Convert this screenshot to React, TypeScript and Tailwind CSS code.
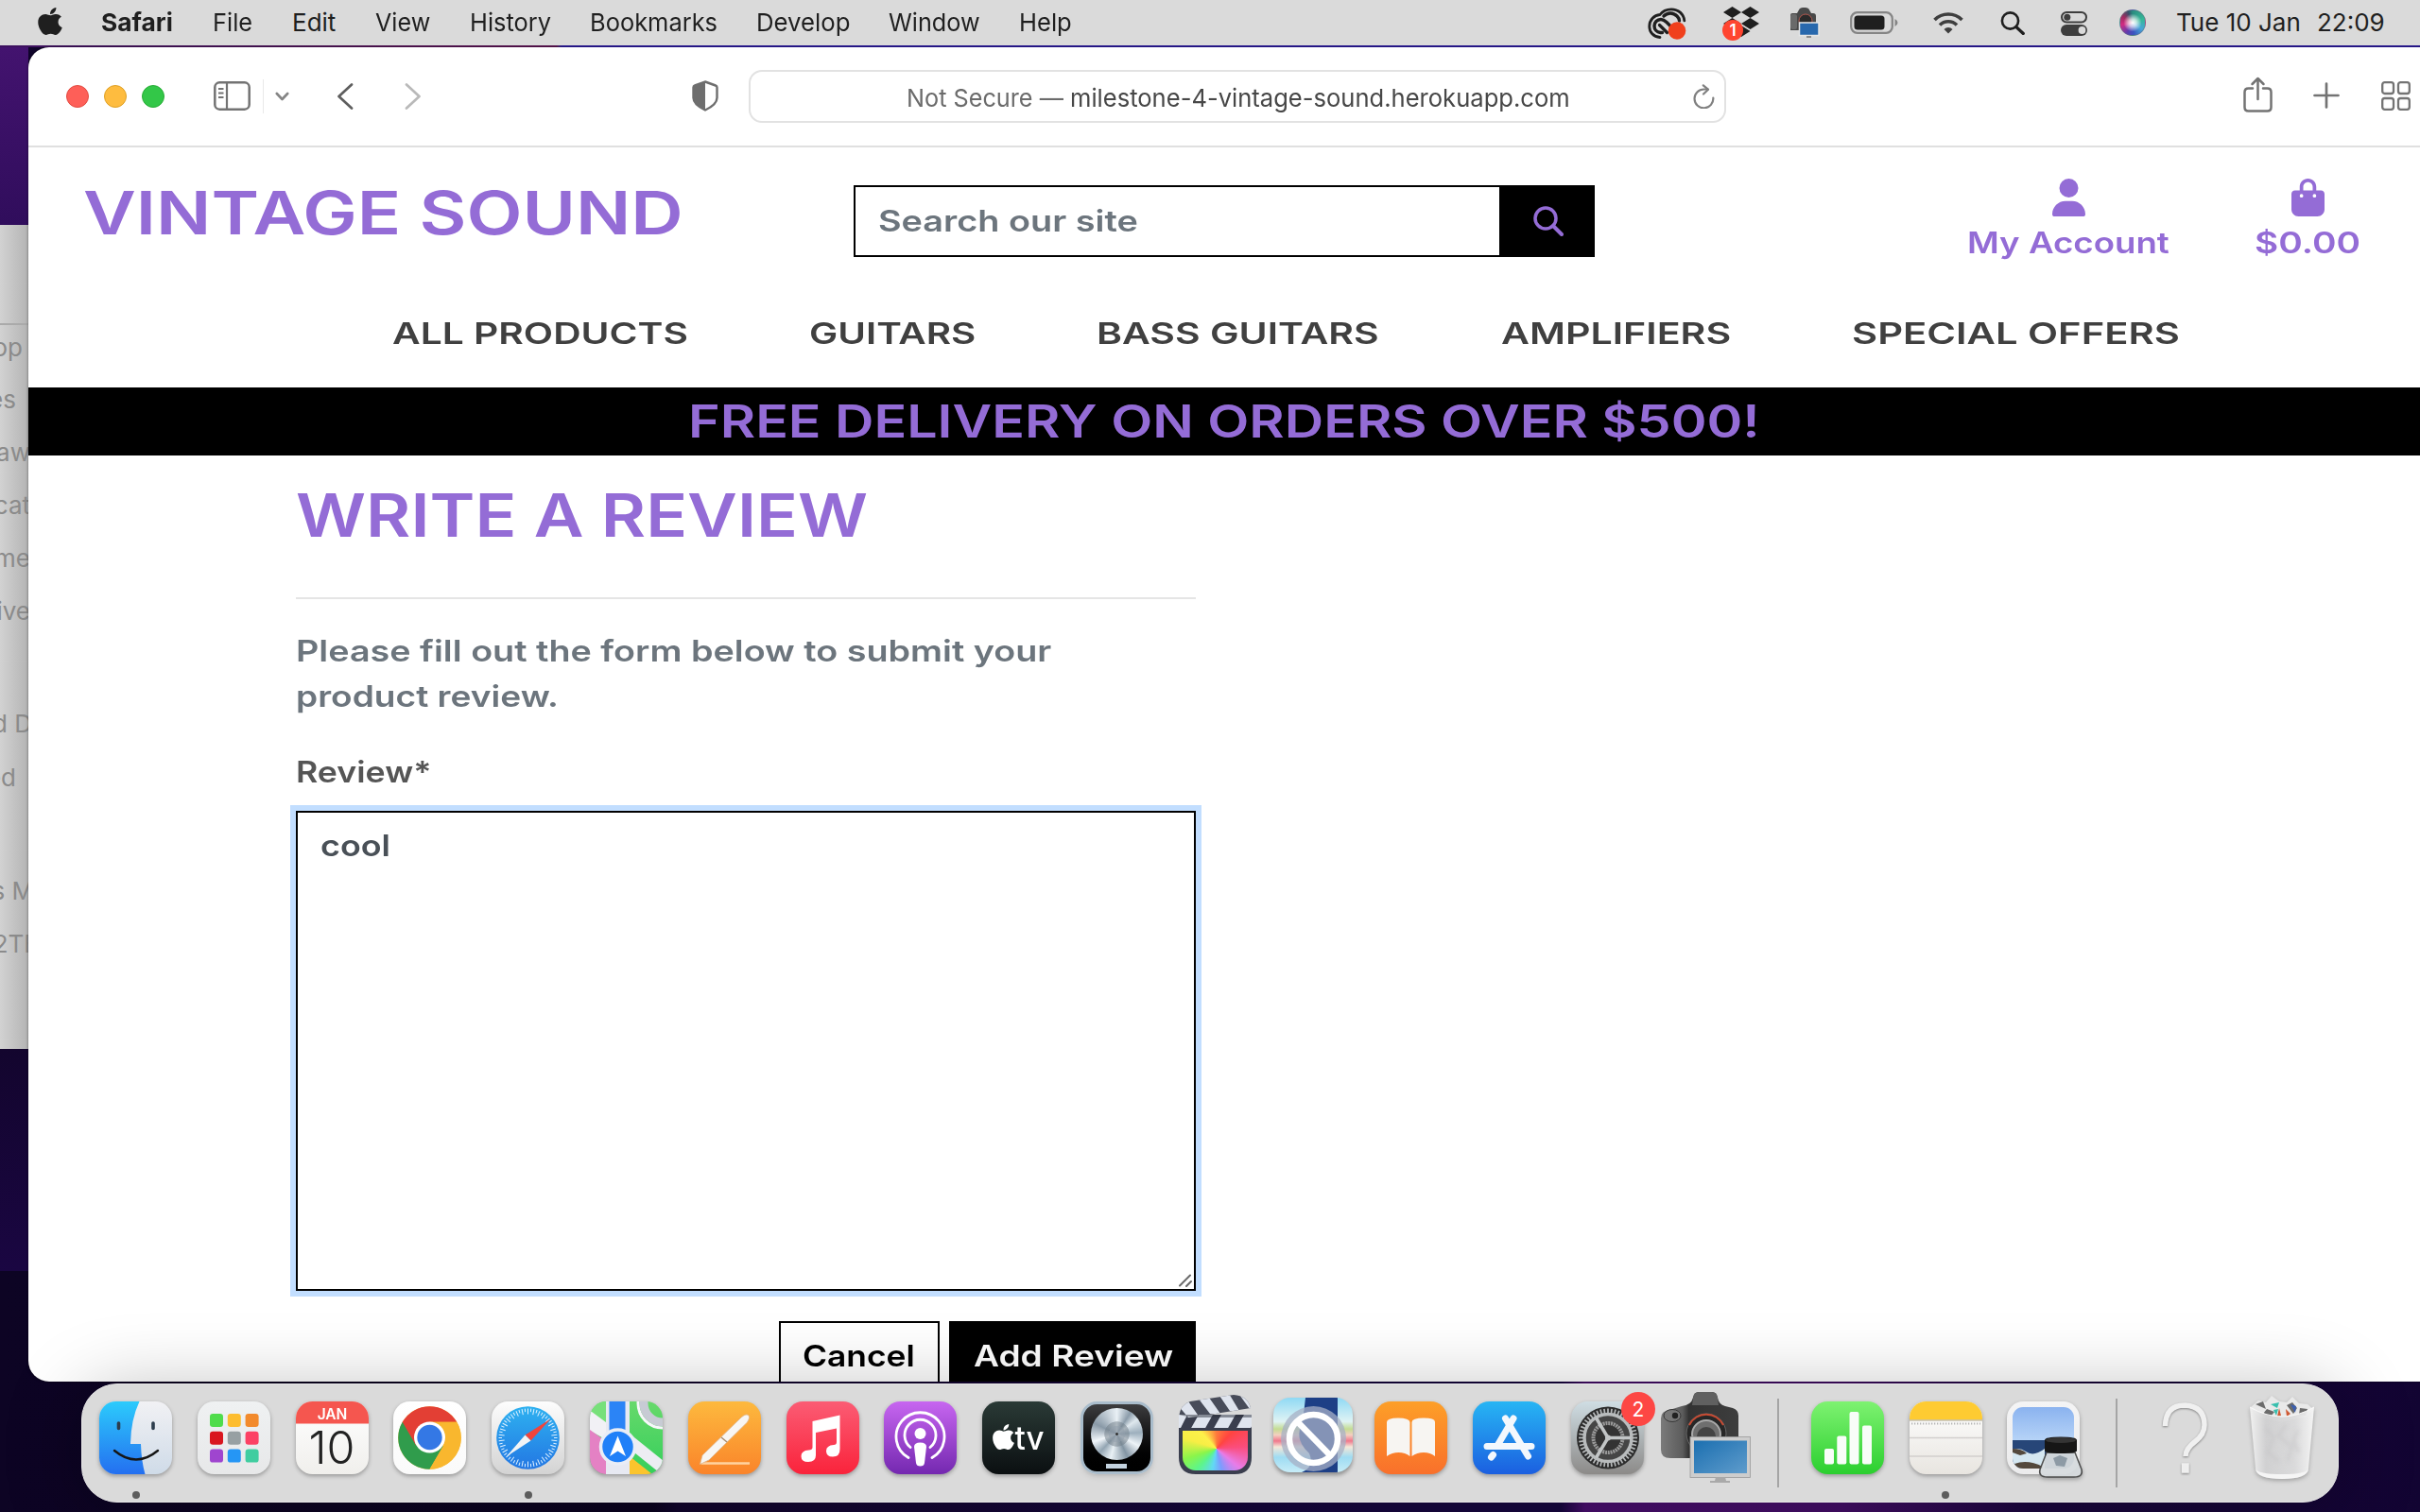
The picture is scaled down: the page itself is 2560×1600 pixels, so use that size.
import React, { useLayoutEffect, useRef, useState } from "react";
import { FaApple, FaBagShopping, FaUser } from "react-icons/fa6";

/** Text stretched horizontally so that it fills exactly `w` pixels. */
function Fit({ w, className = "", children }: { w: number; className?: string; children: string }) {
  const ref = useRef<HTMLSpanElement>(null);
  const [scale, setScale] = useState(1);
  useLayoutEffect(() => {
    if (ref.current) setScale(w / ref.current.offsetWidth);
  }, [w, children]);
  return (
    <span className={"block shrink-0 whitespace-pre " + className} style={{ width: w }}>
      <span ref={ref} className="inline-block origin-left" style={{ transform: `scaleX(${scale})` }}>
        {children}
      </span>
    </span>
  );
}

/* ---------- menu bar ---------- */

const menus = [
  { label: "File", w: 42, cls: "ml-[42px]" },
  { label: "Edit", w: 46, cls: "ml-[42px]" },
  { label: "View", w: 58, cls: "ml-[42px]" },
  { label: "History", w: 86, cls: "ml-[42px]" },
  { label: "Bookmarks", w: 135, cls: "ml-[41px]" },
  { label: "Develop", w: 99, cls: "ml-[41px]" },
  { label: "Window", w: 97, cls: "ml-[41px]" },
  { label: "Help", w: 56, cls: "ml-[41px]" },
];

function MenuBar() {
  return (
    <header className="relative flex h-12 items-center bg-[#dadada] pl-10 text-[26px] leading-[45px] text-[#1f1f1f]">
      <FaApple className="-mt-1 h-[33px] w-[26px] shrink-0" preserveAspectRatio="none" />
      <Fit w={76} className="ml-[41px] -mt-[2px] font-bold">Safari</Fit>
      {menus.map((m) => (
        <Fit key={m.label} w={m.w} className={"-mt-[2px] " + m.cls}>{m.label}</Fit>
      ))}
      <div className="ml-auto flex h-12 items-center pr-[37px]">
        <svg className="mr-[39px] mt-[2px] h-[34px] w-[41px] shrink-0" viewBox="0 0 41 34">
          <g fill="none" stroke="#1f1f1f" strokeLinecap="round">
            <path d="M13 31.500C6 31 1.800 26 1.800 20 1.800 13 7 8 13 7.500 16 3.500 20 1.800 25 1.800c7.500 0 13 5 13.800 12" strokeWidth="2.800" />
            <path d="M15.500 26.500h-2c-4-.5-6.500-3.500-6.500-7 0-4 3-7 7-7 3 0 4.500 1.500 6 3l4.500 4.500" strokeWidth="3.400" />
            <path d="M17 9c4-4 10-4 14 0 1.800 1.800 2.500 3.500 2.500 5" strokeWidth="3.400" />
            <path d="M12.500 18.500l8 8" strokeWidth="3.200" />
          </g>
          <circle cx="31" cy="24.500" r="9.300" fill="#f0401c" />
        </svg>
        <div className="relative mr-[32px] mt-[2px] h-[36px] w-[38px] shrink-0">
          <svg className="h-[34px] w-[38px]" viewBox="0 0 38 34" fill="#1f1f1f">
            <path d="M9.500 0L19 6l-9.500 6L0 6zM28.500 0L38 6l-9.500 6L19 6zM9.500 12l9.500 6-9.500 6L0 18zM28.500 12l9.500 6-9.500 6-9.500-6zM9.500 26l9.500-6 9.500 6-9.500 6z" />
          </svg>
          <span className="absolute -left-[1px] top-[14px] flex h-[22px] w-[22px] items-center justify-center rounded-full bg-[#ff4530] text-[17px] font-semibold leading-none text-white">1</span>
        </div>
        <svg className="mr-[32px] h-[33px] w-[32px] shrink-0" viewBox="0 0 32 33">
          <path d="M1 8q0-2 2-2h5l2.500-4.500Q11.500 0 14 0h3q2.500 0 3.500 1.500L23 6h2q3 0 3 3v15H1z" fill="#484848" />
          <rect x="1" y="7" width="7" height="16" rx="2" fill="#6a6a6a" />
          <circle cx="17" cy="14" r="7" fill="#2a2a2a" stroke="#b1574e" strokeWidth="1" />
          <rect x="10.500" y="16" width="20.500" height="13.500" fill="#2868ad" stroke="#e6e6e6" strokeWidth="1.500" />
          <path d="M18 30h5v2h-5z" fill="#8b8b8b" />
        </svg>
        <svg className="mr-[37px] h-6 w-[51px] shrink-0" viewBox="0 0 51 24">
          <rect x="1.200" y="1.200" width="43.600" height="21.600" rx="6.500" fill="none" stroke="#858585" strokeWidth="2.200" />
          <rect x="4.500" y="4.500" width="32" height="15" rx="3.500" fill="#1f1f1f" />
          <path d="M47.500 8q3 1.500 3 4t-3 4z" fill="#858585" />
        </svg>
        <svg className="mr-[39px] -mt-px h-6 w-8 shrink-0" viewBox="0 0 32 24">
          <g fill="none" stroke="#3e3e3e" strokeWidth="3.600">
            <path d="M1.500 9a20.500 20.500 0 0 1 29 0" />
            <path d="M7 14.500a12.700 12.700 0 0 1 18 0" />
          </g>
          <path d="M16 23.500l-4.500-4.600a6.400 6.400 0 0 1 9 0z" fill="#3e3e3e" />
        </svg>
        <svg className="mr-[38px] h-[25px] w-[26px] shrink-0" viewBox="0 0 26 25">
          <circle cx="10.500" cy="10" r="8.600" fill="none" stroke="#1f1f1f" strokeWidth="2.600" />
          <path d="M16.800 16.500l7.500 7" stroke="#1f1f1f" strokeWidth="3.200" strokeLinecap="round" />
        </svg>
        <svg className="mr-[34px] mt-px h-[26px] w-7 shrink-0" viewBox="0 0 28 26">
          <rect x="1" y="1" width="26" height="10.500" rx="5.200" fill="none" stroke="#3e3e3e" strokeWidth="2" />
          <circle cx="6.800" cy="6.200" r="3.500" fill="#3e3e3e" />
          <rect x="0" y="14" width="28" height="12" rx="6" fill="#3e3e3e" />
          <circle cx="22.500" cy="20" r="3.900" fill="#dadada" />
        </svg>
        <div className="mr-[33px] h-7 w-7 shrink-0 rounded-full border border-gray-500/50 bg-[radial-gradient(circle_at_50%_50%,#ffffff_0%,#ffffffb0_22%,transparent_52%),conic-gradient(#2a8d80,#35b898_20%,#48a6d8_35%,#3a56c0_48%,#5e3cae_58%,#d22c83_72%,#a02b60_84%,#35526b_94%,#2a8d80)]" />
        <Fit w={132} className="-ml-px -mt-[2px]">Tue 10 Jan</Fit>
        <Fit w={72} className="ml-[17px] -mt-[2px]">22:09</Fit>
      </div>
    </header>
  );
}

/* ---------- browser chrome ---------- */

function Toolbar() {
  return (
    <div className="flex h-[106px] shrink-0 items-center border-b-2 border-[#e0e0e0] pl-10 text-[#737373]">
      <div className="flex gap-4">
        <span className="h-6 w-6 rounded-full border border-[#e24b41] bg-[#fe5f58]" />
        <span className="h-6 w-6 rounded-full border border-[#dfa023] bg-[#febc3f]" />
        <span className="h-6 w-6 rounded-full border border-[#27ac35] bg-[#33c748]" />
      </div>
      <svg className="ml-[52px] -mt-px h-[31px] w-[39px]" viewBox="0 0 39 31" fill="none" stroke="currentColor">
        <rect x="1.300" y="1.300" width="36.400" height="28.400" rx="5" strokeWidth="2.500" />
        <path d="M14 1.500v28" strokeWidth="2.200" />
        <path d="M5 8h5.500M5 12.500h5.500M5 17h5.500" strokeWidth="1.800" />
      </svg>
      <span className="ml-[13px] h-9 w-px bg-[#e8e8e8]" />
      <svg className="ml-[12px] h-[10px] w-[15px]" viewBox="0 0 15 10">
        <path d="M1.800 2l5.700 6 5.700-6" fill="none" stroke="#858585" strokeWidth="2.600" strokeLinecap="round" strokeLinejoin="round" />
      </svg>
      <svg className="ml-[50px] -mt-px h-7 w-[18px]" viewBox="0 0 18 28">
        <path d="M16 1.500L2.500 14 16 26.500" fill="none" stroke="#5e5e5e" strokeWidth="2.700" strokeLinecap="round" strokeLinejoin="round" />
      </svg>
      <svg className="ml-[54px] -mt-px h-7 w-[18px]" viewBox="0 0 18 28">
        <path d="M2 1.500L15.500 14 2 26.500" fill="none" stroke="#b9b9b9" strokeWidth="2.700" strokeLinecap="round" strokeLinejoin="round" />
      </svg>
      <svg className="ml-[286px] -mt-px h-[33px] w-[28px]" viewBox="0 0 28 33">
        <path d="M14 1.500L25 5.500q1.500.5 1.500 2v11q0 7-12.500 13Q1.500 25.500 1.500 18.500v-11q0-1.500 1.500-2z" fill="none" stroke="#6e6e6e" strokeWidth="2.400" />
        <path d="M14 1.500L3 5.500q-1.500.5-1.500 2v11q0 7 12.500 13z" fill="#6e6e6e" />
      </svg>
      <div className="ml-[32px] flex h-14 w-[1034px] items-center rounded-[14px] border-2 border-[#e2e2e2] pl-[165px] text-[26px] leading-[54px]">
        <Fit w={166} className="mt-[3px] text-[#6b6b6b]">Not Secure —</Fit>
        <Fit w={529} className="ml-[7px] mt-[3px] text-[#474747]">milestone-4-vintage-sound.herokuapp.com</Fit>
        <svg className="ml-[130px] h-[26px] w-[23px]" viewBox="0 0 23 26" fill="none" stroke="#808080" strokeWidth="2.200" strokeLinecap="round" strokeLinejoin="round">
          <path d="M21.300 14.500A9.900 9.900 0 1 1 11.500 5.500h4" />
          <path d="M10.800 1.300l5.200 4.400-5 4.800" />
        </svg>
      </div>
      <svg className="ml-[547px] -mt-[5px] h-[38px] w-[31px] shrink-0" viewBox="0 0 31 38" fill="none" stroke="currentColor" strokeWidth="2.500" strokeLinecap="round" strokeLinejoin="round">
        <path d="M10 12.500H5.500q-4 0-4 4v16q0 4 4 4h20q4 0 4-4v-16q0-4-4-4H21M15.500 24V2M9.500 8l6-6 6 6" />
      </svg>
      <svg className="ml-[43px] -mt-[2px] h-7 w-7 shrink-0" viewBox="0 0 28 28" stroke="currentColor" strokeWidth="2.700" strokeLinecap="round">
        <path d="M14 1.500v25M1.500 14h25" />
      </svg>
      <svg className="ml-[44px] -mt-px h-[31px] w-[31px] shrink-0" viewBox="0 0 31 31" fill="none" stroke="currentColor" strokeWidth="2.300">
        <rect x="1.200" y="1.200" width="11.800" height="11.800" rx="2.500" />
        <rect x="18" y="1.200" width="11.800" height="11.800" rx="2.500" />
        <rect x="1.200" y="18" width="11.800" height="11.800" rx="2.500" />
        <rect x="18" y="18" width="11.800" height="11.800" rx="2.500" />
      </svg>
    </div>
  );
}

/* ---------- web page ---------- */

function SiteHeader() {
  return (
    <div className="h-[254px] shrink-0 text-[#946cd6]">
      <div className="flex h-[152px]">
        <Fit w={635} className="ml-[58px] mt-[20px] text-[63px] font-semibold leading-[98px]">VINTAGE SOUND</Fit>
        <div className="ml-[180px] mt-[40px] flex h-[76px] w-[784px]">
          <div className="w-[685px] border-2 border-black bg-white pl-[24px] text-[#6c757d]">
            <Fit w={275} className="text-[31.500px] font-semibold leading-[72px]">Search our site</Fit>
          </div>
          <div className="flex w-[99px] items-center justify-center bg-black">
            <svg className="h-8 w-8" viewBox="0 0 32 32" fill="none" stroke="currentColor">
              <circle cx="13" cy="13" r="11" strokeWidth="3.500" />
              <path d="M21 21l9 9" strokeWidth="4" strokeLinecap="round" />
            </svg>
          </div>
        </div>
        <div className="ml-[394px] mt-[33px] flex flex-col items-center">
          <FaUser className="h-10 w-[35px]" />
          <Fit w={214} className="mt-2 text-[31.500px] font-semibold leading-[40px]">My Account</Fit>
        </div>
        <div className="ml-[90px] mt-[33px] flex flex-col items-center">
          <FaBagShopping className="h-10 w-[35px]" />
          <Fit w={112} className="mt-2 text-[31.500px] font-semibold leading-[40px]">$0.00</Fit>
        </div>
      </div>
      <nav className="flex pl-[385px] text-[31.500px] font-semibold leading-[90px] text-[#404040]">
        <Fit w={313}>ALL PRODUCTS</Fit>
        <Fit w={177} className="ml-[128px]">GUITARS</Fit>
        <Fit w={299} className="ml-[127px]">BASS GUITARS</Fit>
        <Fit w={243} className="ml-[129px]">AMPLIFIERS</Fit>
        <Fit w={347} className="ml-[128px]">SPECIAL OFFERS</Fit>
      </nav>
    </div>
  );
}

function ReviewForm() {
  return (
    <main className="w-[1235px] pl-[283px] text-[31.500px] font-semibold leading-[48px] text-[#6c757d]">
      <Fit w={605} className="pt-[30px] text-[63px] leading-[66px] text-[#946cd6]">WRITE A REVIEW</Fit>
      <div className="mt-[54px] h-[2px] bg-[#e5e5e5]" />
      <Fit w={799} className="mt-[31px]">Please fill out the form below to submit your</Fit>
      <Fit w={278}>product review.</Fit>
      <Fit w={144} className="mt-[32px] text-[#555555]">Review*</Fit>
      <div className="relative mt-[17px] h-[508px] border-2 border-black bg-white pl-[24px] pt-[11px] text-[#495057] ring-[6px] ring-[#c2deff]">
        <Fit w={74}>cool</Fit>
        <svg className="absolute bottom-[2px] right-[2px] h-[14px] w-[14px]" viewBox="0 0 14 14" stroke="#6a6a6a" strokeWidth="2" strokeLinecap="round">
          <path d="M1 12.500L12 1.500M8 13l5-5" />
        </svg>
      </div>
      <div className="mt-8 flex justify-end gap-[10px] leading-[68px]">
        <div className="h-[76px] w-[170px] border-2 border-black pl-[23px] pt-px text-black"><Fit w={119}>Cancel</Fit></div>
        <div className="h-[76px] w-[261px] bg-black pl-[26px] pt-[3px] text-white"><Fit w={211}>Add Review</Fit></div>
      </div>
    </main>
  );
}

/* ---------- dock ---------- */

function Tile({ from, to, id, children }: { from: string; to: string; id: string; children?: React.ReactNode }) {
  return (
    <svg className="h-[77px] w-[77px] overflow-visible drop-shadow-[0_2px_2px_rgba(0,0,0,0.3)]" viewBox="0 0 77 77">
      <defs>
        <linearGradient id={"g" + id} x1="0" y1="0" x2="0" y2="1">
          <stop offset="0" stopColor={from} />
          <stop offset="1" stopColor={to} />
        </linearGradient>
        <clipPath id={"c" + id}><rect width="77" height="77" rx="17.500" /></clipPath>
      </defs>
      <rect width="77" height="77" rx="17.500" fill={`url(#g${id})`} />
      {children}
    </svg>
  );
}

const launchColors = ["#4fdc4b", "#fdbd2f", "#f28a2c", "#d9161f", "#97a0a3", "#fc4164", "#9f45cf", "#2596f5", "#40cda0"];
const ticks = Array.from({ length: 60 }, (_, i) => i * 6);
const teeth = Array.from({ length: 48 }, (_, i) => i * 7.5);

const Finder = () => (
  <Tile id="finder" from="#f1f1f4" to="#cfdbe8">
    <defs>
      <linearGradient id="finderBlue" x1="0" y1="0" x2="0" y2="1"><stop offset="0" stopColor="#2ccbfc" /><stop offset="1" stopColor="#246ff0" /></linearGradient>
    </defs>
    <g clipPath="url(#cfinder)">
      <path d="M0 0h42.500q-9 19-9.500 45h11q.5 18 4.500 32H0z" fill="url(#finderBlue)" />
    </g>
    <path d="M20.500 23v5.500M57 23v5.500" stroke="#2d3d4d" strokeWidth="3.600" strokeLinecap="round" />
    <path d="M16 52q23 19 46 0" fill="none" stroke="#151515" strokeWidth="2.400" strokeLinecap="round" />
  </Tile>
);

const Launchpad = () => (
  <Tile id="launch" from="#eff1f2" to="#e7e8e9">
    {launchColors.map((c, i) => (
      <rect key={c} x={13 + (i % 3) * 18.800} y={13 + Math.floor(i / 3) * 18.800} width="14" height="14" rx="3.200" fill={c} />
    ))}
  </Tile>
);

const Calendar = () => (
  <Tile id="cal" from="#ffffff" to="#f0efec">
    <path clipPath="url(#ccal)" d="M0 0h77v23.500H0z" fill="#f5564f" />
    <text x="38.500" y="18.500" textAnchor="middle" fontSize="15.500" fontWeight="600" fill="#fff">JAN</text>
    <text x="38" y="65.500" textAnchor="middle" fontSize="48" fontWeight="300" fill="#222" textLength="49" lengthAdjust="spacingAndGlyphs">10</text>
  </Tile>
);

const Chrome = () => (
  <Tile id="chrome" from="#ffffff" to="#fafafa">
    <circle cx="38.500" cy="38.500" r="33.300" fill="#f9b72e" />
    <path d="M38.500 38.500L9.700 21.800A33.300 33.300 0 0 0 38.500 71.800L53 47z" fill="#309c4c" />
    <path d="M9.700 21.800A33.300 33.300 0 0 1 67.300 21.800H38.500v17L24 46.500z" fill="#e33f34" />
    <path d="M38.500 21.800h28.800a33.300 33.300 0 0 1-28.800 50l14.500-25z" fill="#f9b72e" />
    <circle cx="38.500" cy="38" r="16.500" fill="#fff" />
    <circle cx="38.500" cy="38" r="13.200" fill="#3478e5" />
  </Tile>
);

const Safari = () => (
  <Tile id="safari" from="#fdfdfd" to="#d3d3d3">
    <defs><linearGradient id="safBlue" x1="0" y1="0" x2="0" y2="1"><stop offset="0" stopColor="#2eb1f0" /><stop offset="1" stopColor="#2377e3" /></linearGradient></defs>
    <circle cx="38.500" cy="38.500" r="33.300" fill="url(#safBlue)" />
    {ticks.map((a, i) => (
      <path key={a} d={i % 2 ? "M38.500 7.500v3.500" : "M38.500 7.500v6"} stroke="#dff1ff" strokeWidth="1" transform={`rotate(${a} 38.500 38.500)`} />
    ))}
    <path d="M62.500 18.500L35.500 35.500l6 6z" fill="#f0443c" />
    <path d="M15.500 58.500L35.500 35.500l6 6z" fill="#f2f4f6" />
  </Tile>
);

const Maps = () => (
  <Tile id="maps" from="#67d96b" to="#35cf5b">
    <g clipPath="url(#cmaps)">
      <path d="M0 0h17v24L0 12z" fill="#77e07a" />
      <path d="M-2 8l42 31v14L-2 30z" fill="#f1f1f5" />
      <path d="M0 30l17 12v35H0z" fill="#e481c4" />
      <path d="M42 58l24 19H42z" fill="#fbc42d" />
      <path d="M42 34l36 29v16L42 50z" fill="#ededf3" />
      <path d="M17 0h25v77H17z" fill="#e7e9f2" />
      <path d="M20.500 0h17v40h-17z" fill="#2b84f6" />
      <circle cx="77" cy="2" r="26" fill="none" stroke="#f7f7fa" strokeWidth="3" />
      <circle cx="77" cy="2" r="20" fill="none" stroke="#c7cbd4" strokeWidth="9" />
    </g>
    <circle cx="29.500" cy="48" r="18" fill="#2080f8" stroke="#e9edf6" strokeWidth="3.500" />
    <path d="M29.500 36.500L38 58l-8.500-5.500L21 58z" fill="#fff" />
  </Tile>
);

const Pages = () => (
  <Tile id="pages" from="#fdb93e" to="#fa842a">
    <path d="M14 65.500h51" stroke="#ffd3a0" strokeWidth="2.600" />
    <path d="M12.500 66.500l2.500-9.500L56 17q5-4.500 7.500-2.500t-1 7.500L22 62z" fill="#f8f6f3" stroke="#dcb58c" strokeWidth=".8" />
    <path d="M35 38l6 5" stroke="#a88c70" strokeWidth="1.500" />
  </Tile>
);

const Music = () => (
  <Tile id="music" from="#fb5c74" to="#fa233b">
    <path d="M27.500 21l29-6.500v36q0 8-7.500 8-7 0-7-6t8-6.500q3-.2 3-3V28.500l-22 4.500v24q0 7-8 7-7.500 0-7.500-6t8-6.500q4-.2 4-3z" fill="#fff" />
  </Tile>
);

const Podcasts = () => (
  <Tile id="pod" from="#c766f0" to="#7428b0">
    <g fill="none" stroke="#fff" strokeWidth="2.800" strokeLinecap="round">
      <path d="M26 59.500a25.500 25.500 0 1 1 25 0" />
      <path d="M28 48.500a16.500 16.500 0 1 1 21 0" />
    </g>
    <circle cx="38.500" cy="34" r="6" fill="#fff" />
    <path d="M32 48q0-4.500 6.500-4.500T45 48l-2 17q-.5 3.500-4.500 3.500T34 65z" fill="#fff" />
  </Tile>
);

const Tv = () => (
  <Tile id="tv" from="#2a3a36" to="#0b0f11">
    <FaApple x="7" y="22" size={31} color="#fff" />
    <text x="34.500" y="50.500" fontSize="34" fontWeight="500" fill="#fff" textLength="31" lengthAdjust="spacingAndGlyphs">tv</text>
  </Tile>
);

const Logic = () => (
  <div className="relative flex h-[77px] w-[77px] justify-center rounded-[17.500px] border-[3px] border-[#a9bccb] bg-linear-to-b from-[#3d3d3f] to-black pt-[4px] shadow-md">
    <div className="h-[55px] w-[55px] rounded-full bg-[radial-gradient(circle,#333_0_3%,#8794a0c0_4%_22%,#717e8880_23%_33%,transparent_35%),conic-gradient(#e9f0f5,#8b9caa_9%,#dfe8ee_15%,#9dafbd_24%,#eef4f8_33%,#8395a3_43%,#e9f1f5_54%,#93a5b3_62%,#f1f6fa_70%,#8999a7_82%,#e9f0f5)]" />
    <div className="absolute bottom-[3px] h-[5px] w-[22px] bg-[#c3d2df]" />
  </div>
);

const FinalCut = () => (
  <div className="relative h-[77px] w-[77px]">
    <svg className="absolute -top-[7px] left-0 h-[84px] w-[77px]" viewBox="0 0 77 84">
      <defs>
        <clipPath id="clapTop"><path d="M0 23Q2 10 12 7L58 0q15 1 18 14L1 26z" /></clipPath>
        <clipPath id="clapBot"><path d="M0 21h77v14H0z" /></clipPath>
      </defs>
      <path d="M0 21h77v45q0 18-18 18H18Q0 84 0 66z" fill="#3a3e4e" />
      <g clipPath="url(#clapTop)">
        <path d="M0 0h77v27H0z" fill="#484c5a" />
        <path d="M8 4l14 20H10L-2 10zM30 0l14 20H33L20 3zM52-3l12 20H54L41-2zM72-3l12 18H75L62-3z" fill="#dfe4ee" />
      </g>
      <g clipPath="url(#clapBot)" fill="#dfe4ee">
        <path d="M-3 21h12L1 37h-12zM21 21h15l-9 16H12zM45 21h15l-9 16H36zM69 21h15l-9 16H60z" />
      </g>
      <path d="M0 21h77v3H14z" fill="#2c303c" opacity=".5" />
    </svg>
    <div className="absolute bottom-[4px] left-[4px] h-[42px] w-[69px] rounded-b-[14px] bg-[conic-gradient(from_0deg_at_52%_45%,#ff7a3c,#ff4440_12%,#fb4d7c_24%,#e87ce8_36%,#7d9bff_46%,#62d8f5_53%,#5cf58c_62%,#8bf54a_70%,#f7ee45_80%,#fdf04a_88%,#ff7a3c)]" />
  </div>
);

const Blocked = () => (
  <svg className="-ml-1 -mt-1 h-[81px] w-[85px] overflow-visible drop-shadow-[0_3px_2px_rgba(0,0,0,0.35)]" viewBox="0 0 85 81">
    <defs>
      <clipPath id="cblk"><rect width="84" height="79" rx="18" /></clipPath>
      <linearGradient id="gblk" x1="0" y1="0" x2="0" y2="1">
        <stop offset="0" stopColor="#8fd9f4" /><stop offset=".32" stopColor="#dff3f4" /><stop offset=".42" stopColor="#c4dc92" />
        <stop offset=".5" stopColor="#f4cfc0" /><stop offset=".58" stopColor="#f0788c" /><stop offset=".66" stopColor="#f4e7d8" /><stop offset=".8" stopColor="#9edcf3" /><stop offset="1" stopColor="#c7ecf7" />
      </linearGradient>
    </defs>
    <g clipPath="url(#cblk)">
      <path d="M0 0h84v79H0z" fill="url(#gblk)" />
      <path d="M34 0h34v79H30q14-6 8-20-16-14-8-32 3-14 4-27z" fill="#1d3f86" />
    </g>
    <circle cx="42.500" cy="43.500" r="34.500" fill="#a7b0c6" opacity=".75" />
    <circle cx="42.500" cy="43.500" r="25.500" fill="none" stroke="#fff" strokeWidth="6.500" />
    <path d="M25.500 25.500l35 36" stroke="#fff" strokeWidth="6.500" />
  </svg>
);

const Books = () => (
  <Tile id="books" from="#fd9f28" to="#f9702b">
    <path d="M13 22q0-4.500 12-4.500T37.500 22v36q-5-4-12-4t-12.500 4z" fill="#f7f5f2" />
    <path d="M39.500 22q0-4.500 12.500-4.500T64 22v36q-5-4-12-4t-12.500 4z" fill="#f7f5f2" />
  </Tile>
);

const AppStore = () => (
  <Tile id="store" from="#27b5f4" to="#1b5fe0">
    <g stroke="#f3f8fd" strokeWidth="7" strokeLinecap="round">
      <path d="M15 47.500h47M34.500 18L58.500 58M43 18L27 45M21.500 56.500l-2 2.500" />
    </g>
  </Tile>
);

const Settings = () => (
  <div className="relative">
    <Tile id="sett" from="#cfdde3" to="#8c8a88">
      <circle cx="39" cy="38.500" r="33" fill="#2c2c2c" />
      {teeth.map((a) => (
        <path key={a} d="M39 7.500v5" stroke="#b6b9ba" strokeWidth="1.700" transform={`rotate(${a} 39 38.500)`} />
      ))}
      <circle cx="39" cy="38.500" r="25" fill="#454545" stroke="#b9bcbd" strokeWidth="3.500" />
      <circle cx="39" cy="38.500" r="15.500" fill="#333" stroke="#9a9a9a" strokeWidth="4" strokeDasharray="2 .8" />
      <path d="M39 38.500h24M39 38.500L26.500 17.500M39 38.500L26.500 59.500" stroke="#c2c5c6" strokeWidth="3.500" />
      <circle cx="39" cy="38.500" r="3" fill="#c2c5c6" />
    </Tile>
    <span className="absolute -top-[10px] left-[53px] flex h-9 w-9 items-center justify-center rounded-full bg-[#fd4744] text-[21px] leading-none text-white">2</span>
  </div>
);

const Camera = () => (
  <svg className="-ml-[9px] -mt-[10px] h-[97px] w-[95px] overflow-visible" viewBox="0 0 95 97">
    <defs>
      <linearGradient id="camBody" x1="0" y1="0" x2="1" y2="0"><stop offset="0" stopColor="#7a7a7a" /><stop offset=".28" stopColor="#5c5c5c" /><stop offset=".36" stopColor="#333" /><stop offset="1" stopColor="#3d3d3d" /></linearGradient>
      <linearGradient id="camScr" x1="0" y1="0" x2="1" y2="1"><stop offset="0" stopColor="#1b6fb0" /><stop offset="1" stopColor="#5f9ccc" /></linearGradient>
    </defs>
    <path d="M0 28q0-8 9-9l13-4q10-1 12-9 1-6 6-6h14q5 0 6 6 1 7 8 9l8 2q6 2 6 8v42q0 3-4 3H10Q0 70 0 61z" fill="url(#camBody)" />
    <path d="M34 6q1-6 6-6h14q5 0 6 6l1 8H33z" fill="#606060" />
    <ellipse cx="12" cy="25" rx="9" ry="6.500" fill="#777" stroke="#383838" />
    <circle cx="15" cy="25" r="3.200" fill="#222" />
    <circle cx="48" cy="44" r="21" fill="#272727" stroke="#666" />
    <path d="M30 35a20 20 0 0 1 36 0" fill="none" stroke="#c84a32" strokeWidth="2" />
    <circle cx="48" cy="45" r="15" fill="#6f6f6f" stroke="#aaa" strokeWidth="2" />
    <circle cx="48" cy="47" r="10" fill="#444" />
    <rect x="31" y="47.500" width="63.500" height="43" fill="#cdcdcd" stroke="#999" strokeWidth=".8" />
    <rect x="35" y="51.500" width="56" height="34.500" fill="url(#camScr)" />
    <path d="M58 90h10l1 4h4v2H52v-2h5z" fill="#a9a9a9" />
  </svg>
);

const Numbers = () => (
  <Tile id="num" from="#7ef271" to="#2bcf2f">
    <g fill="#f8fdf8">
      <rect x="14" y="50" width="10" height="16.500" rx="2" /><rect x="27.300" y="36.500" width="10" height="30" rx="2" />
      <rect x="40.500" y="11" width="10" height="55.500" rx="2" /><rect x="54" y="25.500" width="10" height="41" rx="2" />
    </g>
  </Tile>
);

const Notes = () => (
  <Tile id="notes" from="#ffffff" to="#e8e5e0">
    <path clipPath="url(#cnotes)" d="M0 0h77v19.500H0z" fill="#fecb32" />
    <path d="M0 20h77" stroke="#aaa48f" />
    <path d="M2 23.500h73" stroke="#b5b5b5" strokeWidth="2" strokeDasharray="1.300 1.700" />
    <path d="M0 38.500h77M0 58h77" stroke="#d2d0cd" strokeWidth="1.300" />
  </Tile>
);

const Preview = () => (
  <Tile id="prev" from="#f4f4f5" to="#ebebec">
    <defs>
      <clipPath id="photo"><rect x="6" y="6" width="65" height="65" rx="11" /></clipPath>
      <linearGradient id="sky" x1="0" y1="0" x2="0" y2="1"><stop offset="0" stopColor="#83adee" /><stop offset="1" stopColor="#b7d4f7" /></linearGradient>
    </defs>
    <g clipPath="url(#photo)">
      <path d="M0 0h77v42H0z" fill="url(#sky)" />
      <path d="M0 41h77v36H0z" fill="#274678" />
      <path d="M0 53q12-6 20 0t20-3v27H0z" fill="#d5e7f1" />
      <path d="M6 50q10 0 15 5l-7 2-8-3zM8 66q14-5 30 3v5H8z" fill="#54493d" />
    </g>
    <path d="M42 54l-7 18q-2 8 8 8h28q10 0 8-8l-7-18z" fill="#d7dcdf" stroke="#474747" strokeWidth="1.500" opacity=".95" />
    <path d="M49 60l7-3 8 3-3 9-9-1z" fill="#8d9aa5" />
    <path d="M40 41q0-3.500 17-3.500T74 41v11q0 3-17 3t-17-3z" fill="#161616" />
    <ellipse cx="57" cy="41" rx="16" ry="3" fill="#343434" />
  </Tile>
);

const Question = () => (
  <svg className="h-[77px] w-[77px] overflow-visible drop-shadow-[0_1px_1px_rgba(0,0,0,0.4)]" viewBox="0 0 77 77" fill="none" stroke="#f0f0f0">
    <path d="M17.500 26Q18 4 38 4q21 1 21 21 0 10-10 17.500Q39 50 39 58" strokeWidth="5.500" />
    <path d="M35.500 66h6.500v9h-6.500z" fill="#eeeeee" strokeWidth="1.500" />
  </svg>
);

const Trash = () => (
  <svg className="h-[77px] w-[77px] overflow-visible drop-shadow-[0_2px_2px_rgba(0,0,0,0.25)]" viewBox="0 0 77 77">
    <defs>
      <linearGradient id="bin" x1="0" y1="0" x2="1" y2="0"><stop offset="0" stopColor="#f3f3f3" /><stop offset=".25" stopColor="#d2d2d3" /><stop offset=".7" stopColor="#dcdcdd" /><stop offset="1" stopColor="#f7f7f7" /></linearGradient>
      <filter id="soft"><feGaussianBlur stdDeviation="2" /></filter>
    </defs>
    <path d="M4 6l8-7 8 2 6-7 8 6 8 1 6-6 7 7 9 1 6 5-8 9-28 4-22-5z" fill="#e9e9e9" />
    <path d="M9 3l8-3 3 8zM21 8l8 3-4 5-8-3zM42 4l6-3 5 6-4 6zM56 7l8 1-2 7-7-1z" fill="#6b6b6b" />
    <path d="M25 3l9-2-2 6zM28 9l5-1-2 7z" fill="#39bfae" />
    <path d="M46 3l6 2-1 7z" fill="#3b5fb0" /><path d="M41 8l5 5-4 3zM34 7l2 8-4 1z" fill="#cf5a35" />
    <path d="M3 6q34 20 68 0l-6 65q-1 11-28 11T9 71z" fill="url(#bin)" opacity=".95" />
    <path d="M3 6q34 20 68 0" fill="none" stroke="#fafafa" strokeWidth="1" />
    <path d="M9 71q2 6 28 6t28-6q-1 11-28 11T9 71z" fill="#f5f5f5" />
    <path d="M20 28l8 10-6 16 12 10M42 24l-9 12 14 12-4 16M54 30l-5 12 6 12" fill="none" stroke="#c5c4c6" strokeWidth="3" opacity=".6" filter="url(#soft)" />
  </svg>
);

const apps = [
  { I: Finder, dot: true }, { I: Launchpad }, { I: Calendar }, { I: Chrome }, { I: Safari, dot: true }, { I: Maps },
  { I: Pages }, { I: Music }, { I: Podcasts }, { I: Tv }, { I: Logic }, { I: FinalCut }, { I: Blocked }, { I: Books },
  { I: AppStore }, { I: Settings }, { I: Camera },
];
const docs = [{ I: Numbers }, { I: Notes, dot: true }, { I: Preview }];
const tail = [{ I: Question }, { I: Trash }];

function DockGroup({ items }: { items: { I: () => React.JSX.Element; dot?: boolean }[] }) {
  return (
    <div className="flex gap-[26.800px]">
      {items.map(({ I, dot }, i) => (
        <div key={i} className="flex h-[124px] w-[77px] flex-col pt-[18px]">
          <div className="h-[95px] w-[77px]"><I /></div>
          {dot && <span className="h-2 w-2 self-center rounded-full bg-[#5c5c5c]" />}
        </div>
      ))}
    </div>
  );
}

function Dock() {
  return (
    <div className="absolute left-[86px] top-[1464px] flex h-[126px] w-[2388px] rounded-[38px] border border-[#e6e6e6] bg-[#dadada] pl-[18px] shadow-[0_8px_80px_rgba(0,0,0,0.27)]">
      <DockGroup items={apps} />
      <span className="ml-[37px] mr-[34px] mt-[15px] h-[94px] w-[2px] bg-[#a5a5a5]" />
      <DockGroup items={docs} />
      <span className="ml-[38px] mr-[33px] mt-[15px] h-[94px] w-[2px] bg-[#a5a5a5]" />
      <DockGroup items={tail} />
    </div>
  );
}

/* ---------- desktop ---------- */

const slivers = [
  { t: "op", cls: "mt-[8px] mr-[6px]" },
  { t: "es", cls: "mt-[23px] mr-[13px]" },
  { t: "aw", cls: "mt-[24px] -mr-[2px]" },
  { t: "cat", cls: "mt-[24px] -mr-[2px]" },
  { t: "me", cls: "mt-[24px] -mr-[2px]" },
  { t: "ive", cls: "mt-[24px] -mr-[2px]" },
  { t: "d D", cls: "mt-[87px] -mr-[4px]" },
  { t: "ed", cls: "mt-[25px] mr-[13px]" },
  { t: "s M", cls: "mt-[88px] -mr-[6px]" },
  { t: "2TE", cls: "mt-[24px] -mr-[11px]" },
];

export default function App() {
  return (
    <div className="relative h-[1600px] w-[2560px] overflow-hidden bg-[#10042b] font-['Inter',sans-serif]">
      <div className="h-12" />
      <div className="h-[2px] bg-linear-to-r from-[#3c1160] from-0% via-[#5e1552] via-23% to-[#2c1b99] to-[23.200%]" />
      <div className="h-[188px] w-[30px] bg-linear-to-b from-[#43136f] to-[#300d5c]" />
      <div className="flex h-[872px] w-[30px] flex-col items-end bg-linear-to-r from-[#d2d2d2] to-[#b4b4b4] text-[26px] leading-8 text-[#8b8b8b]">
        <div className="mt-[104px] h-[2px] w-full shrink-0 bg-[#aaaaaa]" />
        {slivers.map((s) => (
          <span key={s.t} className={"shrink-0 whitespace-pre " + s.cls}>{s.t}</span>
        ))}
      </div>
      <div className="h-[235px] w-[30px] bg-linear-to-b from-[#13052e] to-[#1a0642]" />
      <div className="h-[255px] bg-[linear-gradient(to_right,#0d0424_0%,#0b0320_27%,#12052e_28%,#170640_57%,#170640_64.500%,#4a0e70_65.500%,#450d69_76%,#1b063f_84%,#120432_100%)]" />

      <section className="absolute left-[30px] top-[50px] flex h-[1412px] w-[2560px] flex-col overflow-hidden rounded-[22px] bg-white shadow-[0_0_3px_rgba(0,0,0,0.5)]">
        <Toolbar />
        <SiteHeader />
        <div className="flex h-[72px] shrink-0 items-center bg-black pl-[698px] text-[#946cd6]">
          <Fit w={1134} className="text-[48px] font-semibold leading-[70px]">FREE DELIVERY ON ORDERS OVER $500!</Fit>
        </div>
        <ReviewForm />
      </section>

      <Dock />
      <div className="absolute left-0 top-0 w-[2560px]"><MenuBar /></div>
    </div>
  );
}
